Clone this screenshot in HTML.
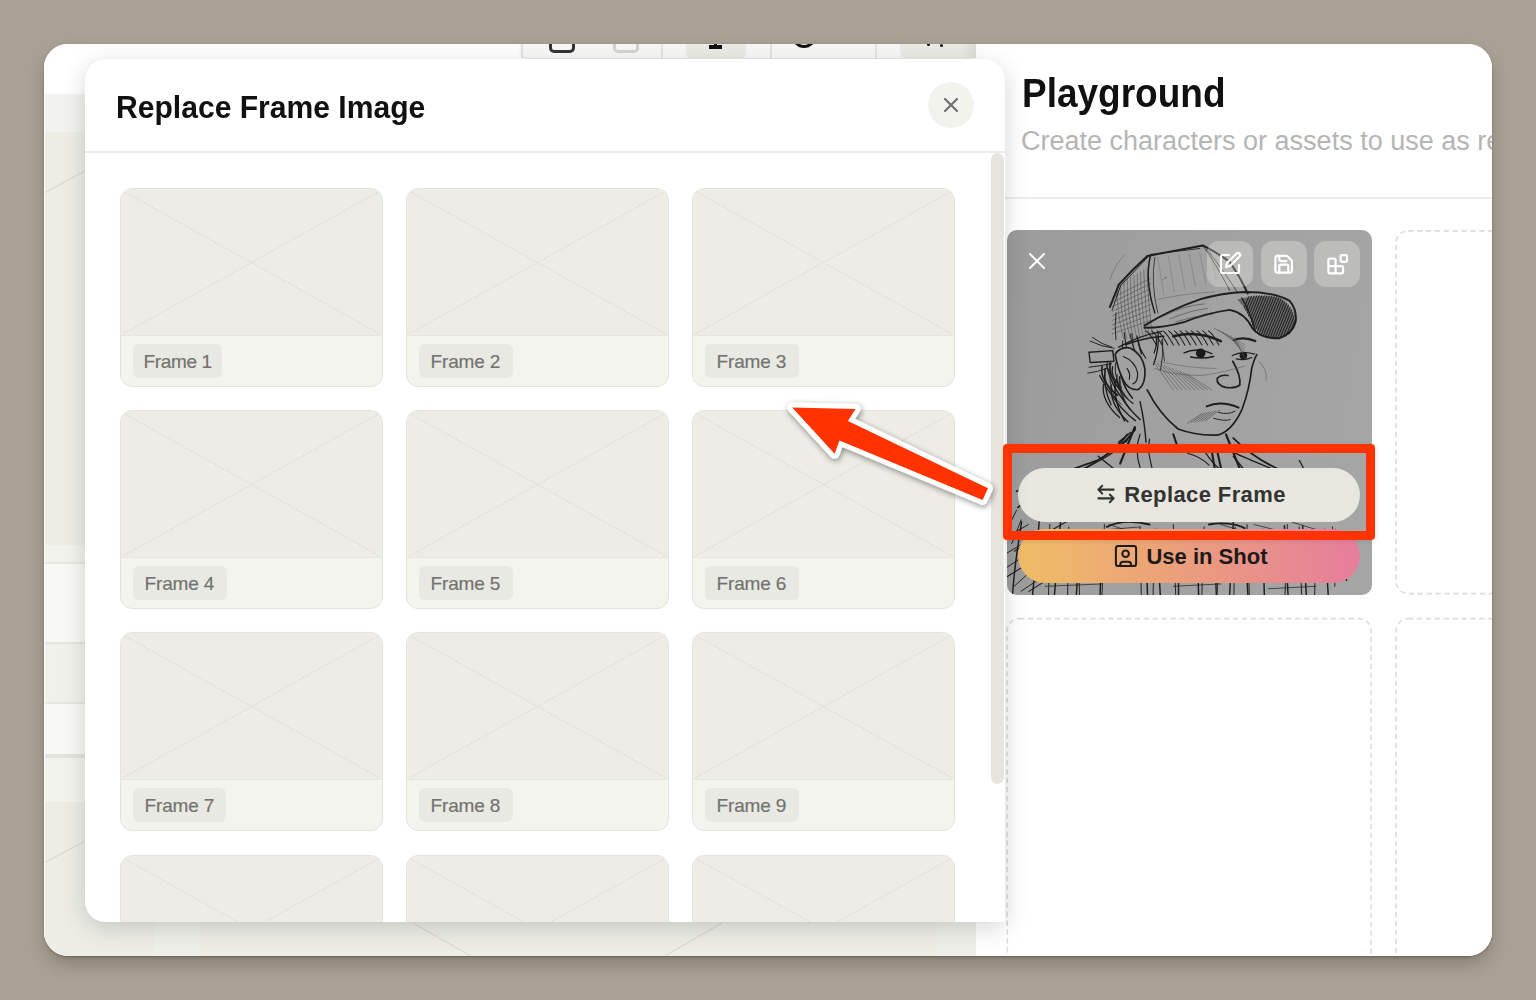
<!DOCTYPE html>
<html><head><meta charset="utf-8">
<style>
*{box-sizing:border-box;margin:0;padding:0}
html,body{width:1536px;height:1000px;overflow:hidden}
body{background:#a8a194;font-family:"Liberation Sans",sans-serif;position:relative}
.abs{position:absolute}
#win{position:absolute;left:44px;top:44px;width:1448px;height:912px;border-radius:24px;overflow:hidden;background:#fff;box-shadow:0 1px 2px rgba(30,25,15,.3),0 9px 18px -3px rgba(40,30,20,.32)}
/* left canvas area (coords relative to window) */
#left{position:absolute;left:0;top:0;width:932px;height:912px;background:#edede6;overflow:hidden}
#right{position:absolute;left:932px;top:0;width:516px;height:912px;background:#fff}
#modal{position:absolute;left:85px;top:59px;width:920px;height:863px;background:#fff;border-radius:20px 20px 0 20px;box-shadow:0 6px 24px rgba(0,0,0,.16),0 0 1px rgba(0,0,0,.1);overflow:hidden}
.card{position:absolute;width:263px;height:199px;border:1px solid #e4e3de;border-radius:12px;overflow:hidden;background:#f4f4ef}
.card .img{position:absolute;left:0;top:0;right:0;height:147px;background:#edece6;border-bottom:1px solid #e6e5df}
.card .img svg{position:absolute;left:0;top:0}
.card .lbl{position:absolute;left:12px;top:155px;height:34px;width:94px;padding:0 0 0 11.5px;background:#e9e9e4;border-radius:6px;font-size:19px;color:#737370;line-height:35px;letter-spacing:-0.15px;-webkit-text-stroke:0.2px #737370}
.dash{border:2px dashed #e3e3e3;border-radius:12px}
.ib{width:46px;height:46px;border-radius:12px;background:rgba(255,255,248,.27)}
.ib svg{position:absolute;left:0;top:0}
.pbtn{width:342px;height:54px;border-radius:27px;display:flex;align-items:center;justify-content:center;font-size:22px;font-weight:700;white-space:nowrap}
</style></head>
<body>
<div id="win">
  <div id="left">
    <div class="abs" style="left:0;top:0;width:1px;height:912px;background:rgba(255,255,255,.8);z-index:5"></div>
    <div class="abs" style="left:0;top:0;width:932px;height:50px;background:#fff"></div>
    <div class="abs" style="left:0;top:50px;width:932px;height:38px;background:#f2f2ee"></div>
    <div class="abs" style="left:0;top:501px;width:932px;height:257px;background:#f3f3ee"></div>
    <div class="abs" style="left:0;top:519px;width:932px;height:80px;background:#f8f8f5"></div>
    <div class="abs" style="left:0;top:599px;width:932px;height:60px;background:#f1f1ec"></div>
    <div class="abs" style="left:0;top:659px;width:932px;height:52px;background:#f8f8f5"></div>
    <div class="abs" style="left:0;top:518px;width:932px;height:2px;background:#e6e6e1"></div>
    <div class="abs" style="left:0;top:598px;width:932px;height:2px;background:#e6e6e1"></div>
    <div class="abs" style="left:0;top:658px;width:932px;height:2px;background:#e6e6e1"></div>
    <div class="abs" style="left:0;top:710px;width:932px;height:4px;background:#e4e4df"></div>
    <div class="abs" style="left:110px;top:758px;width:46px;height:154px;background:#efefea"></div>
    <div class="abs" style="left:893px;top:758px;width:39px;height:154px;background:#efefea"></div>
    <svg class="abs" style="left:0;top:0" width="932" height="912">
      <path d="M0 149L41 127" stroke="#d9d8d2" stroke-width="1.2"/>
      <path d="M0 819L41 797" stroke="#d9d8d2" stroke-width="1.2"/>
      <path d="M369 879L427 912" stroke="#d9d8d2" stroke-width="1.2"/>
      <path d="M677.6 879L621 912" stroke="#d9d8d2" stroke-width="1.2"/>
    </svg>
    <div class="abs" style="left:477px;top:-30px;width:455px;height:44px;background:#f7f7f5;border-radius:0 0 8px 8px;box-shadow:0 1px 3px rgba(0,0,0,.12)">
      <div class="abs" style="left:0;top:0;width:1.5px;height:44px;background:#e3e3e0"></div>
      <div class="abs" style="left:28px;top:15px;width:26px;height:24px;border:3.5px solid #333;border-radius:5px"></div>
      <div class="abs" style="left:92px;top:15px;width:26px;height:24px;border:3.5px solid #d3d3cf;border-radius:5px"></div>
      <div class="abs" style="left:140px;top:0;width:1.5px;height:44px;background:#e3e3e0"></div>
      <div class="abs" style="left:165px;top:0;width:60px;height:44px;background:#ebebe5;border-radius:0 0 4px 4px"></div>
      <div class="abs" style="left:188px;top:31px;width:13px;height:3.5px;background:#111"></div>
      <div class="abs" style="left:193px;top:15px;width:3px;height:18px;background:#111"></div>
      <div class="abs" style="left:249px;top:0;width:1.5px;height:44px;background:#e3e3e0"></div>
      <div class="abs" style="left:271px;top:4px;width:24px;height:30px;border:3px solid #111;border-top:none;border-radius:0 0 12px 12px"></div>
      <div class="abs" style="left:354px;top:0;width:1.5px;height:44px;background:#e3e3e0"></div>
      <div class="abs" style="left:379px;top:0;width:76px;height:44px;background:linear-gradient(90deg,#ebebe5 80%,#dddcd6);border-radius:0 0 0 6px"></div>
      <div class="abs" style="left:406px;top:29px;width:3px;height:3px;background:#111;border-radius:50%"></div>
      <div class="abs" style="left:419px;top:30px;width:3px;height:3px;background:#111;border-radius:50%"></div>
    </div>
  </div>
  <div id="right">
    <div class="abs" style="left:46px;top:29px;font-size:40px;line-height:40px;font-weight:700;color:#111;white-space:nowrap;transform:scaleX(0.925);transform-origin:0 0">Playground</div>
    <div class="abs" style="left:45px;top:84px;font-size:27px;line-height:27px;color:#b5b5b5;white-space:nowrap">Create characters or assets to use as reference</div>
    <div class="abs" style="left:0;top:153px;width:516px;height:2px;background:#ebebeb"></div>
    <svg class="abs" style="left:0;top:0" width="516" height="912" fill="none" stroke="#dcdcdc" stroke-width="1.6" stroke-dasharray="5.2 3.7">
      <rect x="420.1" y="186.9" width="364" height="362.7" rx="12"/>
      <rect x="31.25" y="574.6" width="363.75" height="400" rx="12"/>
      <rect x="420.1" y="574.6" width="364" height="400" rx="12"/>
    </svg>
    <div id="imgcard" class="abs" style="left:31px;top:186px;width:365px;height:365px;border-radius:10px;background:linear-gradient(100deg,#9b9b9b 0%,#a2a2a2 55%,#a6a6a6 100%);overflow:hidden">
    <svg class="abs" style="left:0;top:0" width="365" height="365" viewBox="0 0 365 365">
      <g fill="none" stroke="#1e1e1e" stroke-linecap="round" stroke-linejoin="round" transform="translate(73,5) scale(0.14975)">
        <path d="M430 170Q300 260 240 400M200 300Q230 200 300 130" stroke-width="3" stroke="#555"/>
        <path d="M250 330Q240 500 290 690" stroke-width="3" stroke="#3a3a3a"/>
        <path d="M272 318Q264 500 312 690" stroke-width="3" stroke="#3a3a3a"/>
        <path d="M294 306Q288 500 334 690" stroke-width="3" stroke="#3a3a3a"/>
        <path d="M316 294Q312 500 356 690" stroke-width="3" stroke="#3a3a3a"/>
        <path d="M338 282Q336 500 378 690" stroke-width="3" stroke="#3a3a3a"/>
        <path d="M360 270Q360 500 400 690" stroke-width="3" stroke="#3a3a3a"/>
        <path d="M382 258Q384 500 422 690" stroke-width="3" stroke="#3a3a3a"/>
        <path d="M404 246Q408 500 444 690" stroke-width="3" stroke="#3a3a3a"/>
        <path d="M426 234Q432 500 466 690" stroke-width="3" stroke="#3a3a3a"/>
        <path d="M448 222Q456 500 488 690" stroke-width="3" stroke="#3a3a3a"/>
        <path d="M215 420L470 290" stroke-width="3" stroke="#3a3a3a"/>
        <path d="M215 450L470 325" stroke-width="3" stroke="#3a3a3a"/>
        <path d="M215 480L470 360" stroke-width="3" stroke="#3a3a3a"/>
        <path d="M215 510L470 395" stroke-width="3" stroke="#3a3a3a"/>
        <path d="M215 540L470 430" stroke-width="3" stroke="#3a3a3a"/>
        <path d="M215 570L470 465" stroke-width="3" stroke="#3a3a3a"/>
        <path d="M215 600L470 500" stroke-width="3" stroke="#3a3a3a"/>
        <path d="M215 630L470 535" stroke-width="3" stroke="#3a3a3a"/>
        <path d="M215 660L470 570" stroke-width="3" stroke="#3a3a3a"/>
        <path d="M520 150L560 400" stroke-width="2" stroke="#555"/>
        <path d="M590 142L630 380" stroke-width="2" stroke="#555"/>
        <path d="M660 134L700 360" stroke-width="2" stroke="#555"/>
        <path d="M730 126L770 340" stroke-width="2" stroke="#555"/>
        <path d="M800 118L840 320" stroke-width="2" stroke="#555"/>
        <path d="M870 110L910 300" stroke-width="2" stroke="#555"/>
        <path d="M550 300Q600 260 570 290M520 430Q700 390 900 380" stroke-width="3" stroke="#555"/>
        <path d="M200 480L260 330Q350 230 450 140L820 70Q920 120 1000 180Q1070 280 1120 390" stroke-width="13"/>
        <path d="M215 500L270 340L470 130L800 90M240 520Q230 600 240 700" stroke-width="6"/>
        <path d="M470 140Q430 300 500 520" stroke-width="10"/>
        <path d="M500 150Q470 320 520 520M820 70Q900 180 1000 370M850 100Q930 200 1050 380" stroke-width="5"/>
        <defs><clipPath id="brimclip"><path d="M1050 425Q1200 385 1330 415Q1435 475 1440 580Q1425 675 1330 695Q1215 695 1155 615Q1115 500 1050 425Z"/></clipPath></defs>
        <path d="M1050 430Q1200 390 1330 420Q1430 480 1435 580Q1420 670 1330 690Q1220 690 1160 610Q1120 500 1050 430Z" fill="#333" stroke="none" opacity="0.55"/>
        <g clip-path="url(#brimclip)"><path d="M1000 720L1140 380" stroke-width="6" stroke="#151515"/><path d="M1017 720L1157 380" stroke-width="6" stroke="#151515"/><path d="M1034 720L1174 380" stroke-width="6" stroke="#151515"/><path d="M1051 720L1191 380" stroke-width="6" stroke="#151515"/><path d="M1068 720L1208 380" stroke-width="6" stroke="#151515"/><path d="M1085 720L1225 380" stroke-width="6" stroke="#151515"/><path d="M1102 720L1242 380" stroke-width="6" stroke="#151515"/><path d="M1119 720L1259 380" stroke-width="6" stroke="#151515"/><path d="M1136 720L1276 380" stroke-width="6" stroke="#151515"/><path d="M1153 720L1293 380" stroke-width="6" stroke="#151515"/><path d="M1170 720L1310 380" stroke-width="6" stroke="#151515"/><path d="M1187 720L1327 380" stroke-width="6" stroke="#151515"/><path d="M1204 720L1344 380" stroke-width="6" stroke="#151515"/><path d="M1221 720L1361 380" stroke-width="6" stroke="#151515"/><path d="M1238 720L1378 380" stroke-width="6" stroke="#151515"/><path d="M1255 720L1395 380" stroke-width="6" stroke="#151515"/><path d="M1272 720L1412 380" stroke-width="6" stroke="#151515"/><path d="M1289 720L1429 380" stroke-width="6" stroke="#151515"/><path d="M1306 720L1446 380" stroke-width="6" stroke="#151515"/><path d="M1323 720L1463 380" stroke-width="6" stroke="#151515"/><path d="M1340 720L1480 380" stroke-width="6" stroke="#151515"/><path d="M1357 720L1497 380" stroke-width="6" stroke="#151515"/><path d="M1374 720L1514 380" stroke-width="6" stroke="#151515"/><path d="M1391 720L1531 380" stroke-width="6" stroke="#151515"/><path d="M1408 720L1548 380" stroke-width="6" stroke="#151515"/><path d="M1425 720L1565 380" stroke-width="6" stroke="#151515"/></g>
        <path d="M430 605Q600 500 800 430Q950 385 1100 380Q1300 380 1400 440Q1450 500 1440 580Q1420 660 1330 690Q1200 690 1150 620Q1100 520 1000 500Q850 520 700 580Q560 620 430 620" stroke-width="13"/>
        <path d="M1080 420Q1130 500 1170 640" stroke-width="9"/>
        <path d="M560 540Q700 470 830 460M600 560Q750 500 850 490M640 580Q760 540 880 530" stroke-width="4" stroke="#444"/>
        <path d="M440 640Q470 660 510 735" stroke-width="7"/>
        <path d="M478 640Q508 660 548 735" stroke-width="7"/>
        <path d="M516 640Q546 660 586 735" stroke-width="7"/>
        <path d="M554 640Q584 660 624 735" stroke-width="7"/>
        <path d="M592 640Q622 660 662 735" stroke-width="7"/>
        <path d="M630 640Q660 660 700 735" stroke-width="7"/>
        <path d="M668 640Q698 660 738 735" stroke-width="7"/>
        <path d="M706 640Q736 660 776 735" stroke-width="7"/>
        <path d="M744 640Q774 660 814 735" stroke-width="7"/>
        <path d="M782 640Q812 660 852 735" stroke-width="7"/>
        <path d="M820 640Q850 660 890 735" stroke-width="7"/>
        <path d="M858 640Q888 660 928 735" stroke-width="7"/>
      </g>
      <g fill="none" stroke="#1e1e1e" stroke-linecap="round" stroke-linejoin="round" transform="translate(0,60) scale(0.2376)">
        <path d="M345 262L445 255L450 300L350 305Z" stroke-width="6"/>
        <path d="M350 215Q400 240 450 245M345 325Q390 320 440 310M360 200Q400 230 440 240M340 350Q380 345 420 330" stroke-width="4"/>
        <path d="M420 320Q440 400 480 450Q520 510 560 545M390 360Q420 420 460 470Q500 520 540 550" stroke-width="6"/>
        <path d="M463 356Q453 417 530 478" stroke-width="5.0"/>
        <path d="M482 318Q472 387 528 455" stroke-width="6.2"/>
        <path d="M413 330Q403 407 438 483" stroke-width="5.8"/>
        <path d="M406 398Q396 468 474 537" stroke-width="5.5"/>
        <path d="M422 302Q412 344 468 387" stroke-width="3.8"/>
        <path d="M434 303Q424 363 477 423" stroke-width="6.4"/>
        <path d="M473 364Q463 434 518 504" stroke-width="4.8"/>
        <path d="M439 400Q429 478 509 555" stroke-width="5.8"/>
        <path d="M444 323Q434 366 479 409" stroke-width="6.1"/>
        <path d="M456 385Q446 468 495 551" stroke-width="6.4"/>
        <path d="M400 321Q390 382 466 443" stroke-width="6.9"/>
        <path d="M456 307Q446 382 507 457" stroke-width="4.1"/>
        <path d="M412 333Q402 407 480 481" stroke-width="3.5"/>
        <path d="M434 310Q424 386 457 462" stroke-width="3.7"/>
        <path d="M478 345Q468 418 508 491" stroke-width="3.5"/>
        <path d="M490 312Q480 361 531 411" stroke-width="4.1"/>
        <path d="M655 207Q660 272 646 337" stroke-width="3.6"/>
        <path d="M551 209Q556 239 566 268" stroke-width="6.0"/>
        <path d="M518 185Q523 225 542 265" stroke-width="3.9"/>
        <path d="M493 179Q498 215 504 250" stroke-width="4.8"/>
        <path d="M547 193Q552 240 584 287" stroke-width="4.7"/>
        <path d="M636 182Q641 248 617 314" stroke-width="5.5"/>
        <path d="M525 183Q530 250 547 317" stroke-width="3.6"/>
        <path d="M651 210Q656 254 663 298" stroke-width="3.3"/>
        <path d="M487 214Q492 270 474 327" stroke-width="3.8"/>
        <path d="M628 199Q633 232 619 265" stroke-width="5.2"/>
        <path d="M470 240Q560 190 650 175M500 230Q580 200 660 195" stroke-width="6"/>
        <path d="M455 270Q480 235 520 245Q570 270 580 330Q585 400 550 420Q510 420 490 380Q465 330 455 270Z" stroke-width="7" fill="#a1a1a1"/>
        <path d="M490 280Q540 300 550 350Q550 390 530 395M505 330Q520 350 515 375" stroke-width="5"/>
        <path d="M700 195Q800 168 900 215" stroke-width="11"/>
        <path d="M955 210Q1000 195 1045 215" stroke-width="9"/>
        <path d="M745 265Q800 238 862 268M772 282Q820 292 870 280" stroke-width="6"/>
        <circle cx="815" cy="266" r="20" fill="#1a1a1a" stroke="none"/>
        <path d="M948 276Q990 255 1042 270M965 290Q1000 298 1030 284" stroke-width="5"/>
        <circle cx="995" cy="276" r="16" fill="#1a1a1a" stroke="none"/>
        <path d="M950 300Q985 360 980 400Q960 415 920 410Q880 400 885 372Q900 355 930 360" stroke-width="7"/>
        <path d="M840 490Q900 463 975 495" stroke-width="8"/>
        <path d="M890 515Q930 527 960 510M870 540Q920 555 940 545" stroke-width="4"/>
        <path d="M590 420Q640 520 720 585Q800 615 890 610Q950 590 990 500Q1020 420 1030 330Q1040 290 1052 272" stroke-width="7"/>
        <path d="M615 300L700 420" stroke-width="2.2" stroke="#4a4a4a"/>
        <path d="M631 306L718 420" stroke-width="2.2" stroke="#4a4a4a"/>
        <path d="M647 312L736 420" stroke-width="2.2" stroke="#4a4a4a"/>
        <path d="M663 318L754 420" stroke-width="2.2" stroke="#4a4a4a"/>
        <path d="M679 324L772 420" stroke-width="2.2" stroke="#4a4a4a"/>
        <path d="M695 330L790 420" stroke-width="2.2" stroke="#4a4a4a"/>
        <path d="M711 336L808 420" stroke-width="2.2" stroke="#4a4a4a"/>
        <path d="M727 342L826 420" stroke-width="2.2" stroke="#4a4a4a"/>
        <path d="M743 348L844 420" stroke-width="2.2" stroke="#4a4a4a"/>
        <path d="M759 354L862 420" stroke-width="2.2" stroke="#4a4a4a"/>
        <path d="M760 560L820 520" stroke-width="2.5" stroke="#444"/>
        <path d="M775 558L835 517" stroke-width="2.5" stroke="#444"/>
        <path d="M790 556L850 514" stroke-width="2.5" stroke="#444"/>
        <path d="M805 554L865 511" stroke-width="2.5" stroke="#444"/>
        <path d="M820 552L880 508" stroke-width="2.5" stroke="#444"/>
        <path d="M835 550L895 505" stroke-width="2.5" stroke="#444"/>
        <path d="M870 160L1000 230" stroke-width="2" stroke="#4a4a4a"/>
        <path d="M888 168L1000 242" stroke-width="2" stroke="#4a4a4a"/>
        <path d="M906 176L1000 254" stroke-width="2" stroke="#4a4a4a"/>
        <path d="M924 184L1000 266" stroke-width="2" stroke="#4a4a4a"/>
        <path d="M942 192L1000 278" stroke-width="2" stroke="#4a4a4a"/>
        <path d="M960 200L1000 290" stroke-width="2" stroke="#4a4a4a"/>
        <path d="M620 330Q700 360 820 360Q900 350 1000 320M640 300Q760 330 880 330M1060 300Q1100 340 1090 380" stroke-width="2.2" stroke="#555"/>
        <path d="M560 470Q580 560 585 640M540 580L500 640M520 600L470 640" stroke-width="6"/>
      </g>
      <g fill="none" stroke="#1e1e1e" stroke-linecap="round" transform="scale(0.365)">
        <path d="M330 560C300 600 260 630 200 660C140 690 80 720 30 760" stroke-width="5"/>
        <path d="M620 570C660 610 720 650 800 680C840 700 880 720 920 740" stroke-width="5"/>
        <path d="M350 540L310 640M600 560L640 660" stroke-width="6"/>
        <path d="M40 800C30 860 20 930 15 1000M90 780L70 1000M150 760L130 1000M200 840L190 1000M260 840L255 1000M380 850L385 1000M410 820L420 1000M470 830L470 1000M520 830L525 1000M580 830L575 1000M620 800L610 1000M650 820L660 1000M700 820L705 1000M760 810L770 1000M810 810L820 1000M870 820L880 1000M920 850L930 960" stroke-width="4"/>
        <path d="M20 880L180 790M0 950L160 850M60 990L250 870M700 900L900 820M620 960L880 860M380 900L600 840M200 950L420 880" stroke-width="3"/>
        <path d="M250 620L350 700M620 620L700 720M120 720L260 690" stroke-width="4"/>
      </g>
      <g fill="none" stroke="#1e1e1e" stroke-linecap="round" transform="translate(0,190) scale(0.2376)">
        <path d="M540 40C500 90 470 120 380 170C300 200 200 230 40 300" stroke-width="7"/>
        <path d="M520 60C490 110 440 150 360 185M560 60C545 100 540 140 560 200M600 80C590 120 600 160 610 200" stroke-width="5"/>
        <path d="M830 130C850 160 870 190 900 210M940 130C1000 160 1100 200 1250 260M1230 170C1260 220 1270 250 1250 290M760 140C800 150 830 170 850 190" stroke-width="5"/>
        <path d="M880 110L900 200M860 120L875 210M700 60L720 120" stroke-width="9"/>
        <path d="M40 380L0 460M60 420L20 520M20 480L90 440M0 560L100 500M0 620L120 540M30 700L140 600M60 720L150 660" stroke-width="4"/>
        <path d="M180 440L175 736M260 450L255 736M300 470L305 736M410 440L400 736M560 450L565 736M620 460L615 736M700 440L710 736M830 450L820 736M870 460L880 736M960 450L955 736M1010 440L1020 736M1180 440L1170 736M1230 450L1240 736M1300 460L1295 736M1370 450L1380 700" stroke-width="4"/>
        <path d="M430 440L520 470M440 460L560 450M900 440L1000 470M1040 440L1120 460M1200 430L1330 470M160 700L400 690M700 700L900 690M1100 710L1300 700" stroke-width="3"/>
        <path d="M420 450C460 430 520 420 600 440M850 440C900 430 960 435 1000 455" stroke-width="8"/>
      </g>
    </svg>
    <svg class="abs" style="left:21px;top:22px" width="18" height="18" viewBox="0 0 18 18"><path d="M2 2L16 16M16 2L2 16" stroke="#fff" stroke-width="2" stroke-linecap="round"/></svg>
    <div class="abs ib" style="left:200px;top:11px"><svg width="46" height="46" viewBox="0 0 46 46" fill="none" stroke="#fff" stroke-width="2.2" stroke-linecap="round" stroke-linejoin="round"><path d="M22 14H15.5C14.7 14 14 14.7 14 15.5V30.5C14 31.3 14.7 32 15.5 32H30.5C31.3 32 32 31.3 32 30.5V24"/><path d="M29.5 12.5C30.3 11.7 31.7 11.7 32.5 12.5C33.3 13.3 33.3 14.7 32.5 15.5L23 25L19 26L20 22Z"/></svg></div>
    <div class="abs ib" style="left:254px;top:11px"><svg width="46" height="46" viewBox="0 0 46 46" fill="none" stroke="#fff" stroke-width="2.2" stroke-linecap="round" stroke-linejoin="round"><path d="M16.6 14.8H25.3Q26 14.8 26.5 15.3L30.4 19.2Q30.9 19.7 30.9 20.4V29.4Q30.9 31.6 28.7 31.6H16.6Q14.4 31.6 14.4 29.4V17Q14.4 14.8 16.6 14.8Z"/><path d="M18.3 14.8V18.6Q18.3 20.1 19.8 20.1H25.5"/><path d="M18.3 31.6V25.2Q18.3 23.7 19.8 23.7H25.8Q27.3 23.7 27.3 25.2V31.6"/></svg></div>
    <div class="abs ib" style="left:307px;top:11px"><svg width="46" height="46" viewBox="0 0 46 46" fill="none" stroke="#fff" stroke-width="2.2" stroke-linejoin="round"><path d="M14.4 19.1Q14.4 17.6 15.9 17.6H20.1Q21.6 17.6 21.6 19.1V25.2H27.6Q29.1 25.2 29.1 26.7V30.8Q29.1 32.3 27.6 32.3H15.9Q14.4 32.3 14.4 30.8Z"/><path d="M14.4 25.2H21.6V32.3"/><rect x="26.6" y="14.1" width="6.4" height="6.7" rx="1.3"/></svg></div>
    <div class="abs pbtn" style="left:11px;top:238px;background:#e8e7df;color:#333">
      <svg width="24" height="24" viewBox="0 0 22 22" fill="none" stroke="#333" stroke-width="1.9" stroke-linecap="round" stroke-linejoin="round" style="margin-right:8px;position:relative;left:2px;top:-1px"><path d="M18 7H4M7.5 3.5L4 7L7.5 10.5"/><path d="M4 15H18M14.5 11.5L18 15L14.5 18.5"/></svg><span style="letter-spacing:0.4px">Replace Frame</span></div>
    <div class="abs pbtn" style="left:11px;top:299px;background:linear-gradient(90deg,#f0bd66,#eba07a 45%,#e67d9d);color:#1a1a1a">
      <svg width="24" height="24" viewBox="0 0 24 24" fill="none" stroke="#1a1a1a" stroke-width="2" stroke-linejoin="round" style="margin-right:12px;position:relative;top:0px;left:3.5px"><rect x="1.9" y="1.9" width="20.2" height="20.2" rx="2.4"/><circle cx="11.6" cy="9.8" r="3.3"/><path d="M6.3 22V20.8Q6.3 17.8 9.3 17.8H14.1Q17.1 17.8 17.1 20.8V22"/></svg><span style="position:relative;top:0.5px">Use in Shot</span></div>
    </div>
  </div>
</div>

<div id="modal">
  <div class="abs" style="left:31px;top:32px;font-size:32px;line-height:32px;font-weight:700;color:#111;white-space:nowrap;transform:scaleX(0.94);transform-origin:0 0">Replace Frame Image</div>
  <div class="abs" style="left:843px;top:23px;width:46px;height:46px;border-radius:50%;background:#f3f3ee">
    <svg width="46" height="46" viewBox="0 0 46 46" style="position:absolute;left:0;top:0"><path d="M17 17L29 29M29 17L17 29" stroke="#707070" stroke-width="2.2" stroke-linecap="round"/></svg>
  </div>
  <div class="abs" style="left:0;top:92px;width:920px;height:2px;background:#ecebe7"></div>
  <div class="card" style="left:35px;top:129px"><div class="img"><svg width="263" height="147"><path d="M2 2L259 145M259 2L2 145" stroke="#d6d5cf" stroke-width="1" stroke-dasharray="1.5 1.5"/></svg></div><div class="lbl" style="width:89px;letter-spacing:-0.35px;padding-left:10.5px">Frame 1</div></div>
  <div class="card" style="left:321px;top:129px"><div class="img"><svg width="263" height="147"><path d="M2 2L259 145M259 2L2 145" stroke="#d6d5cf" stroke-width="1" stroke-dasharray="1.5 1.5"/></svg></div><div class="lbl">Frame 2</div></div>
  <div class="card" style="left:607px;top:129px"><div class="img"><svg width="263" height="147"><path d="M2 2L259 145M259 2L2 145" stroke="#d6d5cf" stroke-width="1" stroke-dasharray="1.5 1.5"/></svg></div><div class="lbl">Frame 3</div></div>
  <div class="card" style="left:35px;top:351px"><div class="img"><svg width="263" height="147"><path d="M2 2L259 145M259 2L2 145" stroke="#d6d5cf" stroke-width="1" stroke-dasharray="1.5 1.5"/></svg></div><div class="lbl">Frame 4</div></div>
  <div class="card" style="left:321px;top:351px"><div class="img"><svg width="263" height="147"><path d="M2 2L259 145M259 2L2 145" stroke="#d6d5cf" stroke-width="1" stroke-dasharray="1.5 1.5"/></svg></div><div class="lbl">Frame 5</div></div>
  <div class="card" style="left:607px;top:351px"><div class="img"><svg width="263" height="147"><path d="M2 2L259 145M259 2L2 145" stroke="#d6d5cf" stroke-width="1" stroke-dasharray="1.5 1.5"/></svg></div><div class="lbl">Frame 6</div></div>
  <div class="card" style="left:35px;top:573px"><div class="img"><svg width="263" height="147"><path d="M2 2L259 145M259 2L2 145" stroke="#d6d5cf" stroke-width="1" stroke-dasharray="1.5 1.5"/></svg></div><div class="lbl" style="width:93px">Frame 7</div></div>
  <div class="card" style="left:321px;top:573px"><div class="img"><svg width="263" height="147"><path d="M2 2L259 145M259 2L2 145" stroke="#d6d5cf" stroke-width="1" stroke-dasharray="1.5 1.5"/></svg></div><div class="lbl">Frame 8</div></div>
  <div class="card" style="left:607px;top:573px"><div class="img"><svg width="263" height="147"><path d="M2 2L259 145M259 2L2 145" stroke="#d6d5cf" stroke-width="1" stroke-dasharray="1.5 1.5"/></svg></div><div class="lbl">Frame 9</div></div>
  <div class="card" style="left:35px;top:796px"><div class="img"><svg width="263" height="147"><path d="M2 2L259 145M259 2L2 145" stroke="#d6d5cf" stroke-width="1" stroke-dasharray="1.5 1.5"/></svg></div></div>
  <div class="card" style="left:321px;top:796px"><div class="img"><svg width="263" height="147"><path d="M2 2L259 145M259 2L2 145" stroke="#d6d5cf" stroke-width="1" stroke-dasharray="1.5 1.5"/></svg></div></div>
  <div class="card" style="left:607px;top:796px"><div class="img"><svg width="263" height="147"><path d="M2 2L259 145M259 2L2 145" stroke="#d6d5cf" stroke-width="1" stroke-dasharray="1.5 1.5"/></svg></div></div>
  <div class="abs" style="left:906px;top:94px;width:13px;height:631px;border-radius:7px;background:#e6e5dd"></div>
</div>

<div class="abs" style="left:1003px;top:444px;width:372px;height:96px;border:9px solid #ff3300;border-radius:4px;box-shadow:1px 1px 5px rgba(0,0,0,.1)"></div>
<svg class="abs" style="left:0;top:0;overflow:visible" width="1536" height="1000">
  <defs><filter id="sh" x="-20%" y="-20%" width="140%" height="140%"><feGaussianBlur in="SourceAlpha" stdDeviation="3"/><feOffset dx="1" dy="2"/><feComponentTransfer><feFuncA type="linear" slope="0.45"/></feComponentTransfer><feMerge><feMergeNode/><feMergeNode in="SourceGraphic"/></feMerge></filter></defs>
  <path filter="url(#sh)" d="M792.2 407.6L855.6 409L847.9 420.9L988 488.2L982.6 499.9L839.5 440.5L834.6 453.8Z" fill="#ff3300" stroke="#fff" stroke-width="10" stroke-linejoin="round" paint-order="stroke"/>
</svg>
</body></html>
